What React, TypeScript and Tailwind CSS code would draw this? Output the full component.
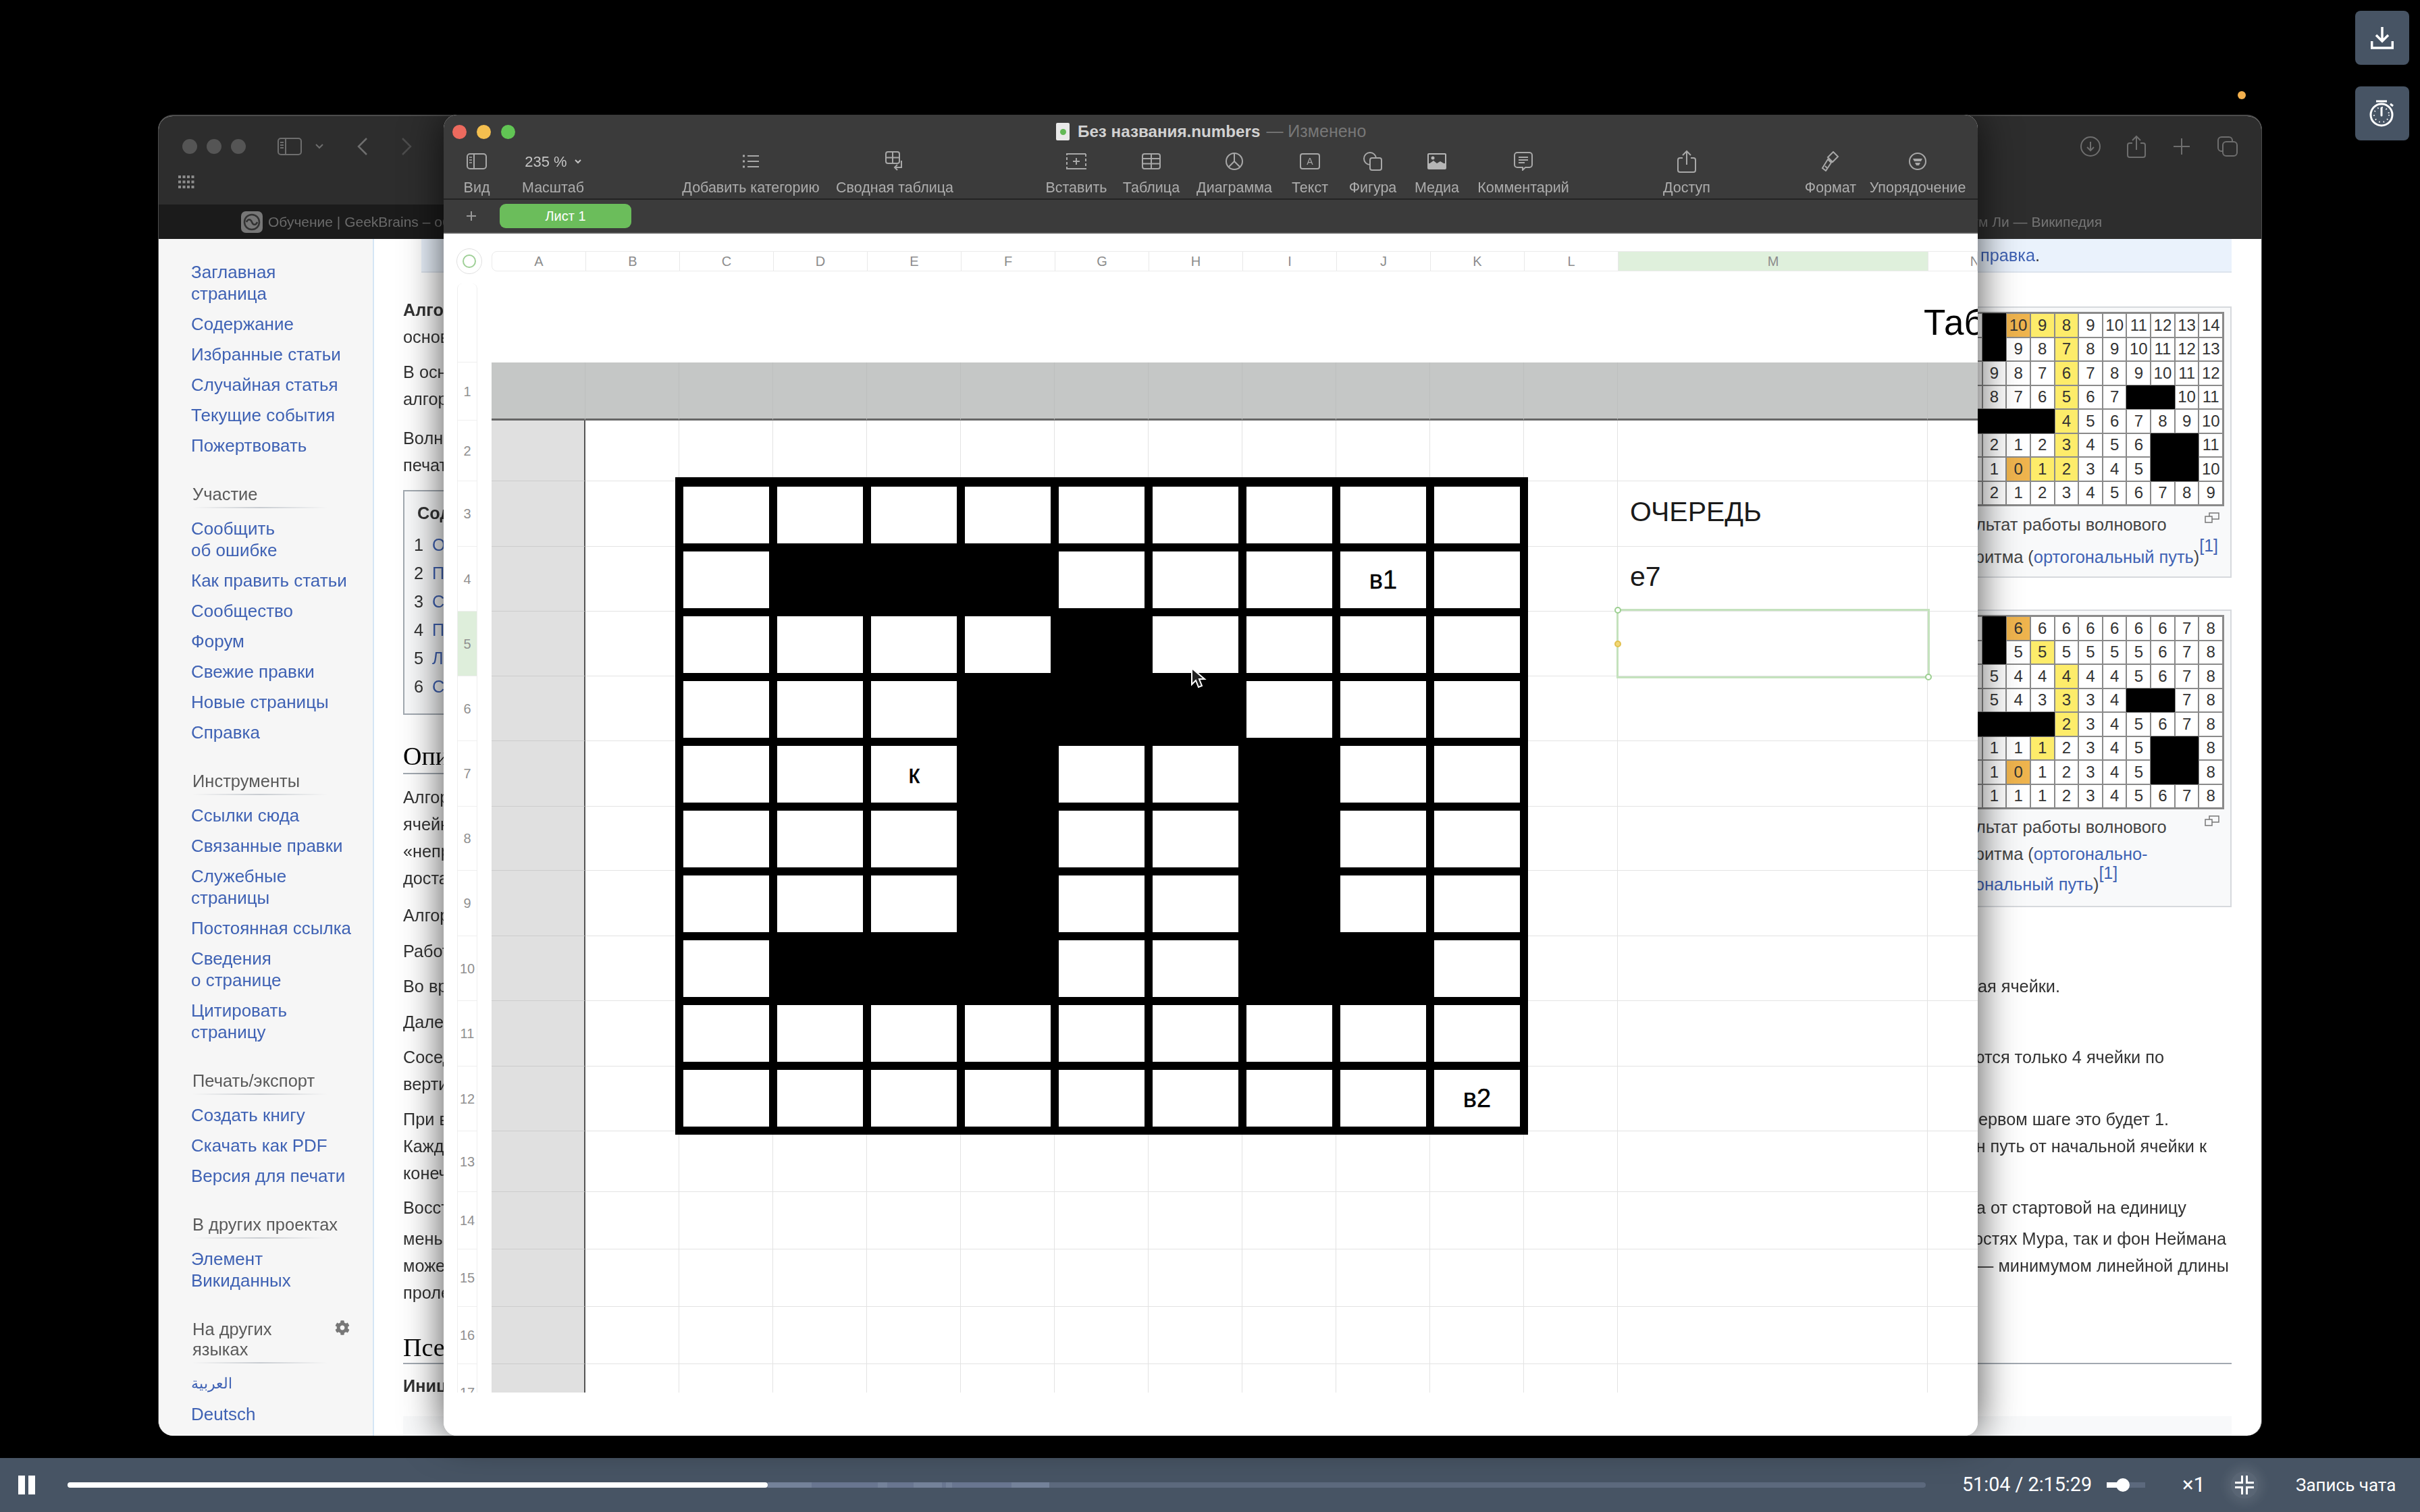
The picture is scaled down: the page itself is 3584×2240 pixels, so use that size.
import { FaCog } from 'react-icons/fa';
import clsx from 'clsx';

const sidebar = [
  { items: ['Заглавная\nстраница', 'Содержание', 'Избранные статьи', 'Случайная статья', 'Текущие события', 'Пожертвовать'] },
  { title: 'Участие', items: ['Сообщить\nоб ошибке', 'Как править статьи', 'Сообщество', 'Форум', 'Свежие правки', 'Новые страницы', 'Справка'] },
  { title: 'Инструменты', items: ['Ссылки сюда', 'Связанные правки', 'Служебные\nстраницы', 'Постоянная ссылка', 'Сведения\nо странице', 'Цитировать\nстраницу'] },
  { title: 'Печать/экспорт', items: ['Создать книгу', 'Скачать как PDF', 'Версия для печати'] },
  { title: 'В других проектах', items: ['Элемент\nВикиданных'] },
  { title: 'На других\nязыках', gear: true, items: ['العربية', 'Deutsch'] },
];

const tableOne = [
  ['', 'B', 'o10', 'y9', 'y8', '9', '10', '11', '12', '13', '14'],
  ['', 'B', '9', '8', 'y7', '8', '9', '10', '11', '12', '13'],
  ['', '9', '8', '7', 'y6', '7', '8', '9', '10', '11', '12'],
  ['', '8', '7', '6', 'y5', '6', '7', 'B', 'B', '10', '11'],
  ['B', 'B', 'B', 'B', 'y4', '5', '6', '7', '8', '9', '10'],
  ['', '2', '1', '2', 'y3', '4', '5', '6', 'B', 'B', '11'],
  ['', '1', 'o0', 'y1', 'y2', '3', '4', '5', 'B', 'B', '10'],
  ['', '2', '1', '2', '3', '4', '5', '6', '7', '8', '9'],
];

const tableTwo = [
  ['', 'B', 'o6', '6', '6', '6', '6', '6', '6', '7', '8'],
  ['', 'B', '5', 'y5', '5', '5', '5', '5', '6', '7', '8'],
  ['', '5', '4', '4', 'y4', '4', '4', '5', '6', '7', '8'],
  ['', '5', '4', '3', 'y3', '3', '4', 'B', 'B', '7', '8'],
  ['B', 'B', 'B', 'B', 'y2', '3', '4', '5', '6', '7', '8'],
  ['', '1', '1', 'y1', '2', '3', '4', '5', 'B', 'B', '8'],
  ['', '1', 'o0', '1', '2', '3', '4', '5', 'B', 'B', '8'],
  ['', '1', '1', '1', '2', '3', '4', '5', '6', '7', '8'],
];

const lowerLines = [
  { left: 'Алгоритм работает в три этапа', cls: 'mt-0' },
  { left: 'Работа алгоритма включает', cls: 'mt-[13px]' },
  { left: 'Во время инициализации', cls: 'mt-[12px]', right: 'отмечая ячейки.', pad: 'mr-[254px]' },
  { left: 'Далее начинается', cls: 'mt-[13px]' },
  { left: 'Соседними считаются', cls: 'mt-[12px]', right: 'рассматриваются только 4 ячейки по', pad: 'mr-[100px]' },
  { left: 'вертикали и горизонтали', cls: 'mt-0' },
  { left: 'При вычислении', cls: 'mt-[12px]', right: 'на первом шаге это будет 1.', pad: 'mr-[93px]' },
  { left: 'Каждая ячейка', cls: 'mt-0', right: 'найден путь от начальной ячейки к', pad: 'mr-[37px]' },
  { left: 'конечной', cls: 'mt-0' },
  { left: 'Восстановление', cls: 'mt-[11px]', right: 'ячейка от стартовой на единицу', pad: 'mr-[67px]' },
  { left: 'меньше', cls: 'mt-[6px]', right: 'окрестностях Мура, так и фон Неймана', pad: 'mr-[8px]' },
  { left: 'может', cls: 'mt-0', right: 'длина — минимумом линейной длины', pad: 'mr-[4px]' },
  { left: 'пролегать', cls: 'mt-0' },
];

const tools = [
  { label: 'Вид', cls: 'w-[98px]', icon: <ViewIcon /> },
  { label: 'Масштаб', cls: 'w-[128px]', icon: <ZoomValue /> },
  { label: 'Добавить категорию', cls: 'w-[220px] ml-[119px]', icon: <ListIcon /> },
  { label: 'Сводная таблица', cls: 'w-[206px]', icon: <PivotIcon /> },
  { label: 'Вставить', cls: 'w-[100px] ml-[116px]', icon: <InsertIcon /> },
  { label: 'Таблица', cls: 'w-[122px]', icon: <TableIcon /> },
  { label: 'Диаграмма', cls: 'w-[124px]', icon: <ChartIcon /> },
  { label: 'Текст', cls: 'w-[100px]', icon: <TextIcon /> },
  { label: 'Фигура', cls: 'w-[86px]', icon: <ShapeIcon /> },
  { label: 'Медиа', cls: 'w-[104px]', icon: <MediaIcon /> },
  { label: 'Комментарий', cls: 'w-[152px]', icon: <CommentIcon /> },
  { label: 'Доступ', cls: 'w-[100px] ml-[116px]', icon: <ShareIcon /> },
  { label: 'Формат', cls: 'w-[100px] ml-[113px]', icon: <BrushIcon /> },
  { label: 'Упорядочение', cls: 'w-[158px]', icon: <ArrangeIcon /> },
];

const colLetters = ['A', 'B', 'C', 'D', 'E', 'F', 'G', 'H', 'I', 'J', 'K', 'L', 'M', 'N'];
const colWidths = colLetters.map((l) => (l === 'M' ? 'w-[459px]' : 'w-[139px]'));
const rowHeights = [
  'h-[86px]', 'h-[90px]', 'h-[97px]', 'h-[96px]', 'h-[96px]', 'h-[96px]', 'h-[97px]', 'h-[95px]', 'h-[97px]',
  'h-[96px]', 'h-[97px]', 'h-[96px]', 'h-[90px]', 'h-[85px]', 'h-[85px]', 'h-[85px]', 'h-[85px]',
];

// 0 = white cell, 1 = black wall
const maze = [
  [0, 0, 0, 0, 0, 0, 0, 0, 0],
  [0, 1, 1, 1, 0, 0, 0, 0, 0],
  [0, 0, 0, 0, 1, 0, 0, 0, 0],
  [0, 0, 0, 1, 1, 1, 0, 0, 0],
  [0, 0, 0, 1, 0, 0, 1, 0, 0],
  [0, 0, 0, 1, 0, 0, 1, 0, 0],
  [0, 0, 0, 1, 0, 0, 1, 0, 0],
  [0, 1, 1, 1, 0, 0, 1, 1, 0],
  [0, 0, 0, 0, 0, 0, 0, 0, 0],
  [0, 0, 0, 0, 0, 0, 0, 0, 0],
];

const mazeLabels: Record<string, string> = { '1-7': 'в1', '4-2': 'к', '9-8': 'в2' };

function ViewIcon() {
  return (
    <svg width="30" height="24" viewBox="0 0 30 24" fill="none" stroke="#a8a8a8" strokeWidth="2">
      <rect x="1" y="1" width="28" height="22" rx="4" />
      <path d="M11 1v22" />
      <path d="M4 6h4M4 10h4M4 14h4" strokeWidth="1.5" />
    </svg>
  );
}

function ZoomValue() {
  return (
    <span className="flex items-center gap-[11px] text-[22px] text-[#c4c4c4]">
      235 %
      <svg width="10" height="8" viewBox="0 0 10 8" fill="none" stroke="#c4c4c4" strokeWidth="2">
        <path d="M1 2l4 4 4-4" />
      </svg>
    </span>
  );
}

function ListIcon() {
  return (
    <svg width="26" height="20" viewBox="0 0 26 20" fill="none" stroke="#a8a8a8" strokeWidth="2">
      <path d="M8 2h17M8 10h17M8 18h17" />
      <path d="M1 2h3M1 10h3M1 18h3" strokeWidth="3" />
    </svg>
  );
}

function PivotIcon() {
  return (
    <svg width="28" height="30" viewBox="0 0 28 30" fill="none" stroke="#a8a8a8" strokeWidth="2">
      <rect x="1" y="1" width="20" height="17" rx="3" />
      <path d="M11 1v17M1 9.5h20" />
      <path d="M24 14v10h-9M18 20l-4 4 4 4" />
    </svg>
  );
}

function InsertIcon() {
  return (
    <svg width="30" height="24" viewBox="0 0 30 24" fill="none" stroke="#a8a8a8" strokeWidth="2">
      <path d="M1 1h28v22H1z" strokeDasharray="4 3" />
      <path d="M1 1h28M1 23h28M15 7v10M10 12h10" />
    </svg>
  );
}

function TableIcon() {
  return (
    <svg width="28" height="24" viewBox="0 0 28 24" fill="none" stroke="#a8a8a8" strokeWidth="2">
      <rect x="1" y="1" width="26" height="22" rx="3" />
      <path d="M1 8h26M1 15.500h26M14 1v22" />
    </svg>
  );
}

function ChartIcon() {
  return (
    <svg width="26" height="26" viewBox="0 0 26 26" fill="none" stroke="#a8a8a8" strokeWidth="2">
      <circle cx="13" cy="13" r="12" />
      <path d="M13 1v12l8 8M13 13L5 21" />
    </svg>
  );
}

function TextIcon() {
  return (
    <svg width="30" height="24" viewBox="0 0 30 24" fill="none" stroke="#a8a8a8" strokeWidth="2">
      <rect x="1" y="1" width="28" height="22" rx="3" />
      <text x="15" y="17" textAnchor="middle" fontSize="14" fill="#a8a8a8" stroke="none" fontFamily="Liberation Sans">
        A
      </text>
    </svg>
  );
}

function ShapeIcon() {
  return (
    <svg width="30" height="28" viewBox="0 0 30 28" fill="none" stroke="#a8a8a8" strokeWidth="2">
      <circle cx="11" cy="10" r="9" />
      <rect x="11" y="9" width="17" height="18" rx="3" fill="#3b3b3b" />
    </svg>
  );
}

function MediaIcon() {
  return (
    <svg width="28" height="24" viewBox="0 0 28 24">
      <rect width="28" height="24" rx="2" fill="#b5b5b5" />
      <rect x="2" y="2" width="24" height="13" fill="#3b3b3b" />
      <circle cx="8" cy="7" r="2.500" fill="#b5b5b5" />
      <path d="M2 16l7-5 5 4 5-3 7 4v2H2z" fill="#b5b5b5" />
    </svg>
  );
}

function CommentIcon() {
  return (
    <svg width="28" height="28" viewBox="0 0 28 28" fill="none" stroke="#a8a8a8" strokeWidth="2">
      <path d="M5 1h18a4 4 0 014 4v14a4 4 0 01-4 4h-6l-4 4v-4H5a4 4 0 01-4-4V5a4 4 0 014-4z" />
      <path d="M7 8h14M7 12h14M7 16h9" />
    </svg>
  );
}

function ShareIcon() {
  return (
    <svg width="28" height="34" viewBox="0 0 28 34" fill="none" stroke="#a8a8a8" strokeWidth="2">
      <path d="M8 12H4a3 3 0 00-3 3v15a3 3 0 003 3h20a3 3 0 003-3V15a3 3 0 00-3-3h-4" />
      <path d="M14 22V2M8 8l6-6 6 6" />
    </svg>
  );
}

function BrushIcon() {
  return (
    <svg width="28" height="30" viewBox="0 0 28 30" fill="none" stroke="#a8a8a8" strokeWidth="2">
      <path d="M18 1l7 7-8 8-7-7zM10 12l5 5-8 12-5-4z" />
      <path d="M6 22l3 3" />
    </svg>
  );
}

function ArrangeIcon() {
  return (
    <svg width="26" height="26" viewBox="0 0 26 26" fill="none" stroke="#a8a8a8" strokeWidth="2">
      <circle cx="13" cy="13" r="12" />
      <path d="M6 9h14l-2 4H8z" fill="#a8a8a8" stroke="none" />
      <path d="M9 15h8l-2 4h-4z" fill="#a8a8a8" stroke="none" />
    </svg>
  );
}

function SafariLeft() {
  return (
    <div className="flex items-center">
      <div className="flex items-center gap-[14px]">
        <span className="h-[22px] w-[22px] rounded-full bg-[#555555]" />
        <span className="h-[22px] w-[22px] rounded-full bg-[#555555]" />
        <span className="h-[22px] w-[22px] rounded-full bg-[#555555]" />
      </div>
      <svg className="ml-[47px]" width="36" height="26" viewBox="0 0 36 26" fill="none" stroke="#6e6e6e" strokeWidth="2">
        <rect x="1" y="1" width="34" height="24" rx="4" />
        <path d="M12 1v24M4 7h5M4 11h5M4 15h5" />
      </svg>
      <svg className="ml-[19px]" width="14" height="10" viewBox="0 0 14 10" fill="none" stroke="#6e6e6e" strokeWidth="2">
        <path d="M2 2l5 5 5-5" />
      </svg>
      <svg className="ml-[48px]" width="18" height="28" viewBox="0 0 18 28" fill="none" stroke="#6e6e6e" strokeWidth="2.500">
        <path d="M15 2L3 14l12 12" />
      </svg>
      <svg className="ml-[47px]" width="18" height="28" viewBox="0 0 18 28" fill="none" stroke="#4c4c4c" strokeWidth="2.500">
        <path d="M3 2l12 12L3 26" />
      </svg>
    </div>
  );
}

function SafariRight() {
  return (
    <div className="flex items-center gap-[39px] pr-[35px]">
      <svg width="30" height="30" viewBox="0 0 30 30" fill="none" stroke="#6e6e6e" strokeWidth="2">
        <circle cx="15" cy="15" r="14" />
        <path d="M15 8v13M10 16l5 5 5-5" />
      </svg>
      <svg width="28" height="34" viewBox="0 0 28 34" fill="none" stroke="#6e6e6e" strokeWidth="2">
        <path d="M8 12H4a3 3 0 00-3 3v15a3 3 0 003 3h20a3 3 0 003-3V15a3 3 0 00-3-3h-4" />
        <path d="M14 22V2M8 8l6-6 6 6" />
      </svg>
      <svg width="28" height="28" viewBox="0 0 28 28" fill="none" stroke="#6e6e6e" strokeWidth="2">
        <path d="M14 2v24M2 14h24" />
      </svg>
      <svg width="30" height="30" viewBox="0 0 30 30" fill="none" stroke="#6e6e6e" strokeWidth="2">
        <rect x="1" y="1" width="21" height="21" rx="5" />
        <rect x="8" y="8" width="21" height="21" rx="5" fill="#2d2d2d" />
      </svg>
    </div>
  );
}

function Sidebar() {
  return (
    <aside className="w-[319px] shrink-0 border-r-2 border-[#d5e6f5] bg-[#f6f6f6] pl-[48px] pt-[33px] text-[26px] leading-[32px] text-[#3f62b4]">
      {sidebar.map((group, i) => (
        <div key={i} className={i > 0 ? 'mt-[41px]' : ''}>
          {group.title && (
            <div className="mb-[14px] pl-[2px]">
              <div className="flex w-[233px] items-start justify-between">
                <span className="whitespace-pre-line text-[25.500px] leading-[30px] text-[#5a5a5a]">{group.title}</span>
                {group.gear && <FaCog className="mt-[2px] text-[22px] text-[#777777]" />}
              </div>
              <div className="mt-[4px] h-[2px] w-[200px] bg-linear-to-r from-transparent via-[#c8ccd1] to-transparent" />
            </div>
          )}
          <div className="flex flex-col gap-[13px]">
            {group.items.map((item) => (
              <a key={item} className={clsx('whitespace-pre-line', item === 'العربية' && 'text-[22px]')}>
                {item}
              </a>
            ))}
          </div>
        </div>
      ))}
    </aside>
  );
}

function WaveTable({ rows }: { rows: string[][] }) {
  return (
    <div className="ml-auto mr-[9px] mt-[6px] w-[396px] border-[2px] border-[#8a8a8a] bg-white">
      {rows.map((row, r) => (
        <div key={r} className="flex h-[35.500px]">
          {row.map((cell, c) => (
            <div
              key={c}
              className={clsx(
                'flex flex-1 items-center justify-center border border-[#8a8a8a] text-[24px] text-[#333333]',
                cell === 'B' && 'border-black bg-black',
                cell.startsWith('o') && 'bg-[#efb44e]',
                cell.startsWith('y') && 'bg-[#fdec6a]',
              )}
            >
              {cell === 'B' ? '' : cell.replace(/^[oy]/, '')}
            </div>
          ))}
        </div>
      ))}
    </div>
  );
}

function ExpandIcon() {
  return (
    <svg className="absolute right-[16px] top-[303px]" width="22" height="16" viewBox="0 0 22 16" fill="none" stroke="#777777" strokeWidth="1.500">
      <rect x="7" y="1" width="14" height="9" />
      <rect x="1" y="6" width="10" height="9" fill="#f8f9fa" />
    </svg>
  );
}

function Article() {
  return (
    <main className="mr-[44px] flex min-w-0 flex-1 flex-col pl-[43px] text-[25.300px] leading-[40px] text-[#333333] [&>*]:shrink-0">
      <div className="ml-[27px] flex h-[50px] items-center justify-end border-b-2 border-[#dde4ee] bg-[#eaf2fc] pr-[284px]">
        <span className="whitespace-nowrap">
          <a className="text-[#3f62b4]">правка</a>.
        </span>
      </div>

      <div className="flex h-[932px] justify-between">
        <div className="w-[500px] whitespace-nowrap pt-[35px]">
          <p className="font-bold">Алгоритм волновой</p>
          <p>основан на методах</p>
          <p className="mt-[12px]">В основе лежит поиск</p>
          <p>алгоритм поиска</p>
          <p className="mt-[18px]">Волновой алгоритм</p>
          <p>печатных плат</p>
          <div className="mt-[17px] h-[333px] w-[400px] border-2 border-[#a2a9b1] bg-[#f8f9fa] pl-[14px] pt-[12px]">
            <p className="pl-[5px] font-bold leading-[40px]">Содержание</p>
            <ol className="mt-[6px] flex flex-col leading-[42px]">
              <li>1 <a className="ml-[6px] text-[#3f62b4]">Описание</a></li>
              <li>2 <a className="ml-[6px] text-[#3f62b4]">Псевдокод</a></li>
              <li>3 <a className="ml-[6px] text-[#3f62b4]">Сложность</a></li>
              <li>4 <a className="ml-[6px] text-[#3f62b4]">Примечания</a></li>
              <li>5 <a className="ml-[6px] text-[#3f62b4]">Литература</a></li>
              <li>6 <a className="ml-[6px] text-[#3f62b4]">Ссылки</a></li>
            </ol>
          </div>
          <h2 className="mt-0 h-[88px] border-b-2 border-[#a2a9b1] pt-[36px] font-['Liberation_Serif',serif] text-[38px] leading-[50px] text-black">
            Описание
          </h2>
          <p className="mt-[14px]">Алгоритм работает</p>
          <p>ячейками</p>
          <p>«непроходимые»</p>
          <p>достаточно</p>
        </div>

        <div className="w-[449px] shrink-0 pt-[50px]">
          <figure className="relative h-[402px] border-2 border-[#d6d9dd] bg-[#f8f9fa]">
            <WaveTable rows={tableOne} />
            <ExpandIcon />
            <figcaption className="whitespace-nowrap pl-[15px] pt-[7px] text-[25.400px] text-[#444444]">
              <p>Результат работы волнового</p>
              <p className="mt-[8px]">
                алгоритма (<a className="text-[#3f62b4]">ортогональный путь</a>)
                <sup className="align-[5px] text-[25px] leading-none text-[#3f62b4]">[1]</sup>
              </p>
            </figcaption>
          </figure>
          <figure className="relative mt-[47px] h-[441px] border-2 border-[#d6d9dd] bg-[#f8f9fa]">
            <WaveTable rows={tableTwo} />
            <ExpandIcon />
            <figcaption className="whitespace-nowrap pl-[15px] pt-[6px] text-[25.400px] text-[#444444]">
              <p>Результат работы волнового</p>
              <p>
                алгоритма (<a className="text-[#3f62b4]">ортогонально-</a>
              </p>
              <p className="mt-[5px]">
                <a className="text-[#3f62b4]">диагональный путь</a>)
                <sup className="align-[5px] text-[25px] leading-none text-[#3f62b4]">[1]</sup>
              </p>
            </figcaption>
          </figure>
        </div>
      </div>

      {lowerLines.map((line) => (
        <div key={line.left} className={clsx('flex justify-between whitespace-nowrap', line.cls)}>
          <span>{line.left}</span>
          {line.right && <span className={line.pad}>{line.right}</span>}
        </div>
      ))}

      <h2 className="h-[86px] border-b-2 border-[#a2a9b1] pt-[36px] font-['Liberation_Serif',serif] text-[38px] leading-[50px] text-black">
        Псевдокод
      </h2>
      <p className="mt-[12px] h-[40px] font-bold">Инициализация</p>
      <div className="mt-[25px] h-[40px] bg-[#f8f9fa]" />
    </main>
  );
}

function SafariWindow() {
  return (
    <section className="absolute left-[234px] top-[170px] flex h-[1957px] w-[3116px] flex-col overflow-hidden rounded-[22px] border-x border-t-2 border-[#4c4c4c] bg-white font-['Liberation_Sans',sans-serif] blur-[0.7px]">
      <div className="h-[131px] shrink-0 bg-[#2d2d2d]">
        <div className="flex h-[90px] items-center justify-between pl-[35px]">
          <SafariLeft />
          <SafariRight />
        </div>
        <svg className="ml-[29px] mt-[-2px]" width="24" height="20" viewBox="0 0 24 20" fill="#8c8c8c">
          <rect width="4" height="4" />
          <rect x="6.500" width="4" height="4" />
          <rect x="13" width="4" height="4" />
          <rect x="19.500" width="4" height="4" />
          <rect y="7.500" width="4" height="4" />
          <rect x="6.500" y="7.500" width="4" height="4" />
          <rect x="13" y="7.500" width="4" height="4" />
          <rect x="19.500" y="7.500" width="4" height="4" />
          <rect y="15" width="4" height="4" />
          <rect x="6.500" y="15" width="4" height="4" />
          <rect x="13" y="15" width="4" height="4" />
          <rect x="19.500" y="15" width="4" height="4" />
        </svg>
      </div>
      <div className="flex h-[51px] shrink-0 whitespace-nowrap text-[21px] text-[#6a6a6a]">
        <div className="flex w-[1558px] items-center gap-[8px] bg-[#1b1b1b] pl-[122px]">
          <svg width="32" height="32" viewBox="0 0 32 32" fill="none">
            <rect width="32" height="32" rx="7" fill="#777777" />
            <circle cx="16" cy="16" r="11" stroke="#333333" strokeWidth="2.500" />
            <path d="M8 16c2-5 6-5 8 0s6 5 8 0" stroke="#333333" strokeWidth="2.500" />
          </svg>
          <span>Обучение | GeekBrains – образовательный портал</span>
        </div>
        <div className="flex flex-1 items-center justify-end bg-[#2d2d2d] pr-[236px] text-[#757575]">Алгоритм Ли — Википедия</div>
      </div>
      <div className="flex min-h-0 flex-1">
        <Sidebar />
        <Article />
      </div>
    </section>
  );
}

function SheetGrid() {
  return (
    <div className="relative">
      {rowHeights.map((h, r) => (
        <div key={r} className={clsx('flex', h)}>
          {colWidths.map((w, c) => (
            <div
              key={c}
              className={clsx(
                'flex shrink-0 items-center border-b border-r pb-[5px] pl-[18px] text-[41px] text-[#1a1a1a]',
                w,
                r === 0 && 'border-b-[3px] border-[#bdbfbe] border-b-[#666666] bg-[#c5c7c6]',
                r > 0 && c === 0 && 'border-r-2 border-[#cccccc] border-r-[#555555] bg-[#e0e0e0]',
                r > 0 && c > 0 && 'border-[#e3e3e3] bg-white',
              )}
            >
              {c === 12 && r === 2 && 'ОЧЕРЕДЬ'}
              {c === 12 && r === 3 && 'е7'}
            </div>
          ))}
        </div>
      ))}

      <div className="absolute left-[272px] top-[170px] grid grid-cols-[repeat(9,127px)] grid-rows-[repeat(10,84px)] gap-[12px] bg-black px-[12px] pb-[12px] pt-[14px]">
        {maze.flatMap((row, r) =>
          row.map((wall, c) => (
            <div
              key={`${r}-${c}`}
              className={clsx(
                'flex items-center justify-center text-[38px] text-black [-webkit-text-stroke:0.4px_black]',
                !wall && 'bg-white',
              )}
            >
              {mazeLabels[`${r}-${c}`]}
            </div>
          )),
        )}
      </div>

      <div className="absolute left-[1666px] top-[365px] h-[103px] w-[464px] border-[3px] border-[#c4e2bd]">
        <span className="absolute left-[-6px] top-[-6px] h-[10px] w-[10px] rounded-full border-2 border-[#9ccf91] bg-white" />
        <span className="absolute left-[-6px] top-[44px] h-[10px] w-[10px] rounded-full border-2 border-[#e2c04e] bg-[#f2d878]" />
        <span className="absolute bottom-[-6px] right-[-6px] h-[10px] w-[10px] rounded-full border-2 border-[#9ccf91] bg-white" />
      </div>

      <svg className="absolute left-[1035px] top-[451px]" width="24" height="32" viewBox="0 0 24 32">
        <path d="M2 2v24l6-6 4 10 5-2-4-10h8z" fill="#222222" stroke="#ffffff" strokeWidth="2" />
      </svg>
    </div>
  );
}

function NumbersWindow() {
  return (
    <section className="absolute left-[657px] top-[170px] flex h-[1957px] w-[2272px] flex-col overflow-hidden rounded-[20px] bg-white font-['Liberation_Sans',sans-serif] shadow-[0_0_60px_rgba(0,0,0,0.7)] blur-[0.7px]">
      <header className="h-[126px] shrink-0 border-b-2 border-[#232323] bg-[#3b3b3b]">
        <div className="flex h-[50px] items-center pl-[13px]">
          <div className="flex items-center gap-[15px]">
            <span className="h-[21px] w-[21px] rounded-full bg-[#ec6a5e]" />
            <span className="h-[21px] w-[21px] rounded-full bg-[#f4bf4f]" />
            <span className="h-[21px] w-[21px] rounded-full bg-[#61c554]" />
          </div>
          <span className="ml-[801px] flex h-[26px] w-[20px] items-center justify-center rounded-[2px] bg-[#e9e9e9]">
            <span className="h-[9px] w-[9px] rounded-full bg-[#63b956]" />
          </span>
          <span className="ml-[12px] whitespace-nowrap text-[24.200px] font-bold text-[#d2d2d2]">Без названия.numbers</span>
          <span className="ml-[9px] whitespace-nowrap text-[25px] text-[#777777]">— Изменено</span>
        </div>
        <div className="flex h-[74px]">
          {tools.map((tool) => (
            <div key={tool.label} className={clsx('flex shrink-0 flex-col items-center', tool.cls)}>
              <div className="flex h-[38px] items-center">{tool.icon}</div>
              <span className="mt-[4px] whitespace-nowrap text-[21.500px] leading-[32px] text-[#adadad]">{tool.label}</span>
            </div>
          ))}
        </div>
      </header>

      <div className="flex h-[50px] shrink-0 items-center border-b-2 border-[#555555] bg-[#3b3b3b] pl-[34px]">
        <svg width="14" height="14" viewBox="0 0 14 14" fill="none" stroke="#9a9a9a" strokeWidth="2">
          <path d="M7 0v14M0 7h14" />
        </svg>
        <div className="ml-[35px] flex h-[36px] w-[195px] items-center justify-center rounded-[9px] bg-[#6bbd5b] text-[20px] text-white">
          Лист 1
        </div>
      </div>

      <div className="flex min-h-0 flex-1 flex-col bg-white">
        <div className="mt-[26px] flex h-[30px] shrink-0 items-center">
          <div className="ml-[19px] flex h-[38px] w-[38px] shrink-0 items-center justify-center rounded-full border border-[#e0e0e0]">
            <span className="h-[20px] w-[20px] rounded-full border-2 border-[#9fd097]" />
          </div>
          <div className="ml-[14px] flex h-[30px] overflow-hidden rounded-l-[8px] border border-[#ebebeb]">
            {colLetters.map((letter, c) => (
              <div
                key={letter}
                className={clsx(
                  'flex shrink-0 items-center justify-center border-r border-[#e8e8e8] text-[20px] text-[#8c8c8c]',
                  colWidths[c],
                  letter === 'M' && 'bg-[#dff0dc]',
                )}
              >
                {letter}
              </div>
            ))}
          </div>
        </div>

        <div className="mt-[18px] flex h-[1643px] shrink-0 overflow-hidden">
          <div className="ml-[20px] w-[30px] shrink-0 overflow-hidden rounded-t-[8px] border-x border-[#eeeeee]">
            <div className="h-[117px] border-b border-[#eeeeee]" />
            {rowHeights.map((h, r) => (
              <div
                key={r}
                className={clsx(
                  'flex items-center justify-center border-b border-[#eeeeee] text-[20px] text-[#909090]',
                  h,
                  r === 4 && 'bg-[#deeedb]',
                )}
              >
                {r + 1}
              </div>
            ))}
          </div>
          <div className="ml-[21px] shrink-0">
            <div className="h-[117px] whitespace-nowrap pl-[2121px] pt-[23px] text-[53px] leading-[70px] text-black">Таб</div>
            <SheetGrid />
          </div>
        </div>
      </div>
    </section>
  );
}

function SideButtons() {
  return (
    <div className="absolute right-[16px] top-[16px] flex flex-col gap-[32px]">
      <button className="flex h-[80px] w-[80px] items-center justify-center rounded-[8px] bg-[#475464]">
        <svg width="34" height="34" viewBox="0 0 34 34" fill="none" stroke="#ffffff" strokeWidth="3.500">
          <path d="M17 1v21M8 13l9 9 9-9" />
          <path d="M1.700 22v10h30.600V22" />
        </svg>
      </button>
      <button className="flex h-[80px] w-[80px] items-center justify-center rounded-[8px] bg-[#475464]">
        <svg width="38" height="40" viewBox="0 0 38 40" fill="none" stroke="#ffffff" strokeWidth="3">
          <path d="M10 2h16" strokeWidth="3" />
          <circle cx="18" cy="22" r="16" />
          <path d="M18 12v11" strokeLinecap="round" />
          <path d="M31 6l4 3" />
          <circle cx="18" cy="22" r="11" strokeWidth="2" strokeDasharray="1.500 5" />
        </svg>
      </button>
    </div>
  );
}

function PlayerBar() {
  return (
    <footer className="flex h-[80px] shrink-0 items-center bg-[#475464] pl-[27px] font-['Roboto',sans-serif] text-white">
      <div className="flex gap-[5px]">
        <span className="h-[28px] w-[10px] bg-white" />
        <span className="h-[28px] w-[10px] bg-white" />
      </div>
      <div className="ml-[48px] flex h-[8px] w-[2752px] shrink-0 overflow-hidden rounded-full bg-[#5c697d]">
        <span className="w-[1037px] rounded-r-full bg-white" />
        <span className="w-[65px] bg-[#74829a]" />
        <span className="w-[98px] bg-[#697690]" />
        <span className="w-[14px] bg-[#74829a]" />
        <span className="w-[39px] bg-[#697690]" />
        <span className="w-[42px] bg-[#74829a]" />
        <span className="w-[6px] bg-[#697690]" />
        <span className="w-[9px] bg-[#74829a]" />
        <span className="w-[88px] bg-[#697690]" />
        <span className="w-[56px] bg-[#74829a]" />
      </div>
      <span className="ml-[54px] w-[191px] shrink-0 whitespace-nowrap text-[28.700px]">51:04 / 2:15:29</span>
      <div className="relative ml-[23px] flex h-[8px] w-[57px] shrink-0 bg-[#5c697d]">
        <span className="w-[23px] bg-white" />
        <span className="absolute left-[14px] top-[-6px] h-[20px] w-[20px] rounded-full bg-white" />
      </div>
      <span className="ml-[55px] w-[32px] shrink-0 text-[31px]">×1</span>
      <div className="ml-[40px] flex h-[40px] w-[40px] shrink-0 items-center justify-center rounded-full bg-white/10 shadow-[0_0_14px_8px_rgba(255,255,255,0.08)]">
        <svg width="28" height="28" viewBox="0 0 28 28" fill="#ffffff">
          <path d="M9 0h3v12H0V9h9zM16 0h3v9h9v3H16zM0 16h12v12H9V19H0zM16 16h12v3h-9v9h-3z" />
        </svg>
      </div>
      <span className="ml-[56px] whitespace-nowrap text-[26px]">Запись чата</span>
    </footer>
  );
}

export default function App() {
  return (
    <div className="flex h-[2240px] w-[3584px] flex-col overflow-hidden bg-black">
      <div className="relative h-[2160px] shrink-0">
        <SafariWindow />
        <NumbersWindow />
        <span className="absolute left-[3314px] top-[135px] h-[12px] w-[12px] rounded-full bg-[#f3b04d]" />
        <SideButtons />
      </div>
      <PlayerBar />
    </div>
  );
}
